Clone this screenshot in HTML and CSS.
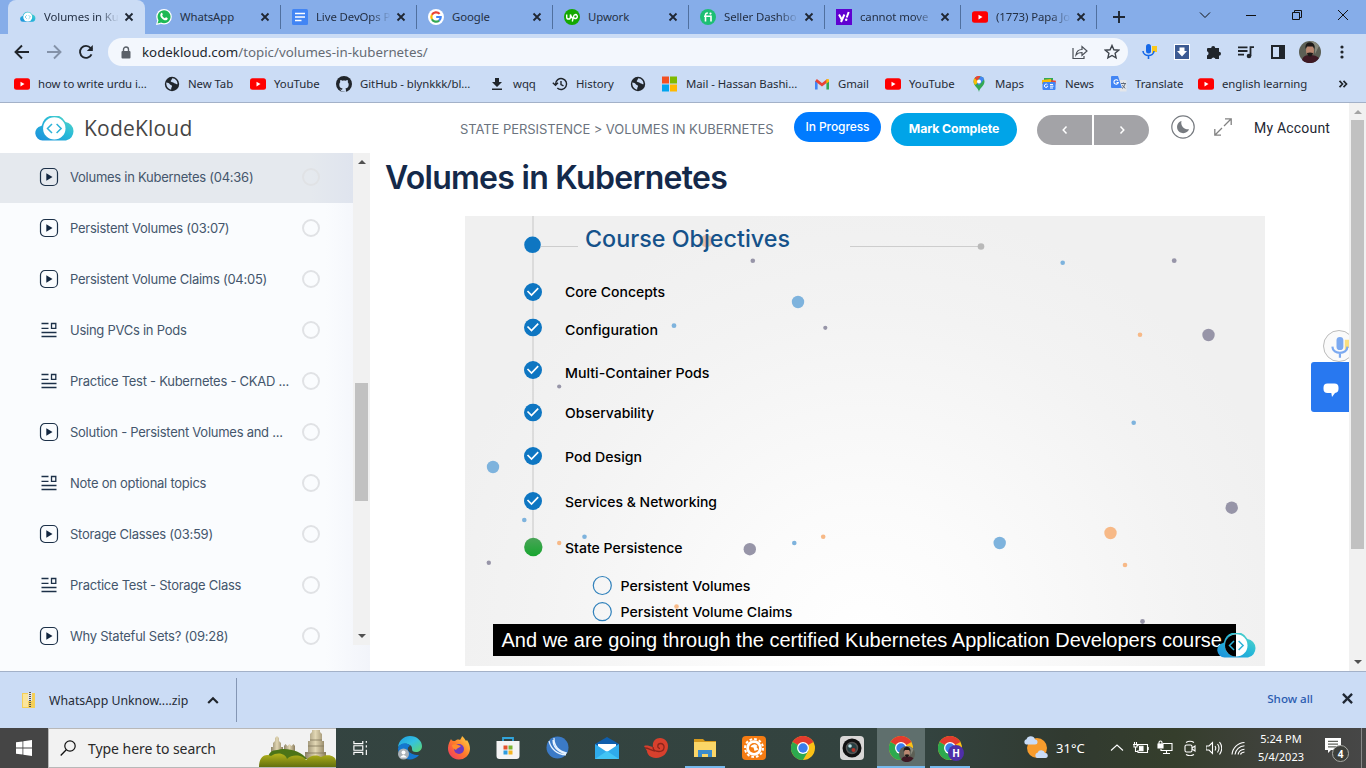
FILE: index.html
```html
<!DOCTYPE html>
<html lang="en">
<head>
<meta charset="utf-8">
<title>Volumes in Kubernetes</title>
<link rel="stylesheet" href="styles.css">
</head>
<body>
<svg class="sprite" width="0" height="0" aria-hidden="true">
  <defs>
    <linearGradient id="cloudGrad" x1="0" y1="1" x2="1" y2="0"><stop offset="0" stop-color="#1b8fdc"/><stop offset=".55" stop-color="#27b9d8"/><stop offset="1" stop-color="#5fdcc4"/></linearGradient>
    <linearGradient id="edgeGrad" x1="0" y1="0" x2="1" y2="1"><stop offset="0" stop-color="#1b9de2"/><stop offset=".5" stop-color="#35c1e0"/><stop offset="1" stop-color="#5fd869"/></linearGradient>
    <linearGradient id="fireGrad" x1="0" y1="1" x2="1" y2="0"><stop offset="0" stop-color="#f0306a"/><stop offset=".5" stop-color="#ff7a2a"/><stop offset="1" stop-color="#ffe04a"/></linearGradient>
    <linearGradient id="greenGrad" x1="0" y1="0" x2="0" y2="1"><stop offset="0" stop-color="#4aa458"/><stop offset="1" stop-color="#17a62f"/></linearGradient>
    <radialGradient id="slideBg" gradientUnits="userSpaceOnUse" cx="865" cy="640" r="440"><stop offset="0" stop-color="#fff"/><stop offset=".3" stop-color="#fbfbfb"/><stop offset=".75" stop-color="#f3f3f3"/><stop offset="1" stop-color="#f0f0f0"/></radialGradient>
    <linearGradient id="stone" x1="0" x2="1"><stop offset="0" stop-color="#8d8368"/><stop offset=".5" stop-color="#e2d7b4"/><stop offset="1" stop-color="#8a7d5d"/></linearGradient>
    <linearGradient id="bush" x1="0" y1="0" x2="0" y2="1"><stop offset="0" stop-color="#b5b41c"/><stop offset="1" stop-color="#62700e"/></linearGradient>
  </defs>
  <symbol id="close" viewBox="0 0 10 10"><path d="M1.5 1.5l7 7M8.5 1.5l-7 7" stroke="#1f2733" stroke-width="1.8"/></symbol>
  <symbol id="cloud" viewBox="0 0 40 25"><path d="M7.500 24.500a7.400 7.400 0 0 1-1.500-14.600 1 1 0 0 0 .9-.7A12.700 12.700 0 0 1 30.500 6 9.400 9.400 0 0 1 31 24.500z" fill="url(#cloudGrad)"/><circle cx="19.300" cy="12.400" r="11.200" fill="#fff"/><path d="M17 8l-4.500 4.500L17 17M21.600 8l4.500 4.500-4.500 4.500" fill="none" stroke="#2cb2d8" stroke-width="1.500"/></symbol>
  <symbol id="yt" viewBox="0 0 16 16"><rect y="2.300" width="16" height="11.500" rx="2.500" fill="#f00"/><path d="M6.500 5.700v4.700l4-2.350z" fill="#fff"/></symbol>
  <symbol id="globe" viewBox="0 0 16 16"><circle cx="8" cy="8" r="7.200" fill="#20252b"/><path d="M2.300 6.600c1.700.5 3 .5 3.500 1.600.4 1 2.200.6 2.200 1.900 0 1-.8 1.300-.9 3.600C4.100 13.300 2 10 2.300 6.600zM8.300 2.300c-.9 1-.3 1.600-1.300 2.200-1 .7.3 1.800 1.500 1.700 1-.1 1.200 1.200 2.700 1.200.9 0 1 .9 2.300.9C13.600 5 11.600 2.600 8.300 2.300z" fill="#cbdcf5"/></symbol>
  <symbol id="google" viewBox="0 0 16 16"><circle cx="8" cy="8" r="8" fill="#fff"/><g fill="none" stroke-width="2.200"><path d="M11.600 4.900A4.700 4.700 0 0 0 3.900 5.800" stroke="#ea4335"/><path d="M3.900 5.800a4.700 4.700 0 0 0 0 4.400" stroke="#fbbc05"/><path d="M3.900 10.200a4.700 4.700 0 0 0 7.200 1.400" stroke="#34a853"/><path d="M11.100 11.600A4.600 4.600 0 0 0 12.700 8H8.200" stroke="#4285f4"/></g></symbol>
  <symbol id="play" viewBox="0 0 20 20"><rect x="1.500" y="1.500" width="17" height="17" rx="4.500" fill="none" stroke="#1c3048" stroke-width="1.200"/><path d="M7.300 6.200v7.600l6.200-3.800z" fill="#12263f"/></symbol>
  <symbol id="notes" viewBox="0 0 20 20"><path d="M2.500 3.500h7M2.500 8.300h7M2.500 12.500h15M2.500 16.500h15M12.500 3.500h4.300v4.800h-4.300z" fill="none" stroke="#1c3048" stroke-width="1.300"/></symbol>
  <symbol id="check" viewBox="0 0 18 18"><circle cx="9" cy="9" r="9" fill="#0e76c2"/><path d="M3.500 8l4 4 6.700-6.800" fill="none" stroke="#fff" stroke-width="1.700"/></symbol>
  <symbol id="chrome" viewBox="0 0 24 24"><circle cx="12" cy="12" r="12" fill="#fbc116"/><path d="M12 12L1.600 6A12 12 0 0 1 22.400 6z" fill="#e33b2e"/><path d="M1.600 6A12 12 0 0 0 12 24l5.200-9L12 12z" fill="#2da94f"/><circle cx="12" cy="12" r="6" fill="#fff"/><circle cx="12" cy="12" r="4.700" fill="#3b7ded"/></symbol>
  <symbol id="portrait" viewBox="0 0 22 22"><circle cx="11" cy="11" r="11" fill="#5c5f55"/><path d="M3 19c1-4 4-5 8-5s7 1 9 3a11 11 0 0 1-17 2z" fill="#3e1924"/><path d="M11 0a11 11 0 0 1 9 5l-4 8V5z" fill="#88897c"/><ellipse cx="11" cy="9.500" rx="4" ry="5.500" fill="#b98770"/><path d="M6.500 8C6 3 8 1.500 11 1.500S16 3 15.500 8L14 5.500H8zM8 12q3-1 6 0-.5 3.500-3 3.500T8 12z" fill="#1d1918"/></symbol>
  <symbol id="mic" viewBox="0 0 16 16"><path d="M10 2h5v6h-3l-2 2z" fill="#fbc91c"/><rect x="4" y="0" width="5" height="9.500" rx="2.500" fill="#1568e8"/><path d="M1 7c.3 6 10.700 6 11 0M6.500 11.500V15" fill="none" stroke="#1568e8" stroke-width="1.600"/></symbol>
</svg>

<header class="tabstrip">
  <div class="tab tab-active"><svg class="fav"><use href="#cloud"/></svg><span class="tab-title fade">Volumes in Ku</span><svg class="x"><use href="#close"/></svg></div>
  <div class="tab"><svg class="fav" viewBox="0 0 16 16"><circle cx="8" cy="7.800" r="7.800" fill="#fff"/><path d="M0 16l1.200-4.500L5 15z" fill="#fff"/><path d="M1.500 14.500l1-3.300a6.500 6.500 0 1 1 2.600 2.400z" fill="#1db954"/><path d="M5 4.200c.8-.8 1.400-.3 1.800 1.200L6.200 6.500c.6 1.400 1.500 2.200 2.700 2.800l1-1c1.300.4 2 .8 1.800 1.400-.8 2.500-3.600 1.700-5.200.3C4.200 8.200 3.600 5.500 5 4.200z" fill="#fff"/></svg><span class="tab-title">WhatsApp</span><svg class="x"><use href="#close"/></svg></div>
  <div class="tab"><svg class="fav" viewBox="0 0 16 16"><rect width="16" height="16" rx="1.500" fill="#4285f4"/><path d="M3 4.500h10M3 8h10M3 11.500h6.500" stroke="#fff" stroke-width="1.600"/></svg><span class="tab-title fade">Live DevOps P</span><svg class="x"><use href="#close"/></svg></div>
  <div class="tab"><svg class="fav"><use href="#google"/></svg><span class="tab-title">Google</span><svg class="x"><use href="#close"/></svg></div>
  <div class="tab"><svg class="fav" viewBox="0 0 16 16"><circle cx="8" cy="8" r="8" fill="#14a800"/><path d="M2.700 5.500v2.700a1.800 1.800 0 0 0 3.700 0V5.500c.6 2.600 1.500 3.700 3 4.300M8.300 12.500l1.200-5c.4-1.600 1.200-2 2.100-2a2 2 0 1 1-.6 4l-1.600-.8" fill="none" stroke="#fff" stroke-width="1.400"/></svg><span class="tab-title">Upwork</span><svg class="x"><use href="#close"/></svg></div>
  <div class="tab"><svg class="fav" viewBox="0 0 16 16"><circle cx="8" cy="8" r="8" fill="#1dbf73"/><path d="M5.500 12.500V6c0-1.600 1-2 2.300-1.900M4 7.300h7v5.200" fill="none" stroke="#fff" stroke-width="1.600"/><circle cx="10.500" cy="4.600" r="1.100" fill="#fff"/></svg><span class="tab-title fade">Seller Dashbo</span><svg class="x"><use href="#close"/></svg></div>
  <div class="tab"><svg class="fav" viewBox="0 0 16 16"><path fill="#5f01d1" d="M0 0h16v16H0z"/><path d="M3 5.500l2.600 4.800M8.400 5.500L5 13" stroke="#fff" stroke-width="2"/><path d="M12.700 3l-2 5.500" stroke="#fff" stroke-width="2"/><circle cx="10.200" cy="10.800" r="1.200" fill="#fff"/></svg><span class="tab-title fade">cannot move</span><svg class="x"><use href="#close"/></svg></div>
  <div class="tab"><svg class="fav"><use href="#yt"/></svg><span class="tab-title fade">(1773) Papa Jo</span><svg class="x"><use href="#close"/></svg></div>
  <svg class="newtab" viewBox="0 0 12 12"><path d="M6 0v12M0 6h12" stroke="#1f2733" stroke-width="1.900"/></svg>
  <div class="winctl">
    <svg viewBox="0 0 12 12"><path d="M1 3.500l5 5 5-5"/></svg>
    <svg viewBox="0 0 12 12"><path d="M1 6.500h10"/></svg>
    <svg viewBox="0 0 12 12"><path d="M1.500 3.500h7v7h-7zM3.500 3.500v-2h7v7h-2"/></svg>
    <svg viewBox="0 0 12 12"><path d="M1 1l10 10M11 1L1 11"/></svg>
  </div>
</header>

<div class="toolbar">
  <svg class="nav" viewBox="0 0 16 16"><path d="M15 8H2M8 1.500L1.500 8 8 14.500" fill="none" stroke="#20252b" stroke-width="1.900"/></svg>
  <svg class="nav" viewBox="0 0 16 16"><path d="M1 8h13M8 1.500L14.500 8 8 14.500" fill="none" stroke="#8492a8" stroke-width="1.900"/></svg>
  <svg class="nav" viewBox="0 0 16 16"><path d="M13.500 10.300A6 6 0 1 1 12.600 4L14 5.500" fill="none" stroke="#20252b" stroke-width="1.900"/><path d="M14.800 1v6H8.800z" fill="#20252b"/></svg>
  <div class="omnibox">
    <svg class="lock" viewBox="0 0 10 13"><rect x=".5" y="5" width="9" height="7.500" rx="1" fill="#5a6068"/><path d="M2.500 5V3.500a2.500 2.500 0 0 1 5 0V5" fill="none" stroke="#5a6068" stroke-width="1.400"/></svg>
    <span class="url"><b>kodekloud.com</b>/topic/volumes-in-kubernetes/</span>
    <svg class="oi" viewBox="0 0 16 16"><path d="M1 4v10.500h11V12M4 11c.5-4 3-5.500 6-5.500V2.500L15 7l-5 4.500v-3c-3 0-4.500.5-6 2.500z" fill="none" stroke="#4a4f57" stroke-width="1.200"/></svg>
    <svg class="oi" viewBox="0 0 16 16"><path d="M8 1.500l1.900 4.300 4.700.4-3.500 3.100 1 4.600L8 11.500l-4.100 2.400 1-4.600L1.400 6.200l4.700-.4z" fill="none" stroke="#3e444c" stroke-width="1.400"/></svg>
  </div>
  <div class="exts">
    <svg><use href="#mic"/></svg>
    <svg viewBox="0 0 16 16"><path fill="#fff" d="M0 0h16v16H0z"/><path fill="#3c5a92" d="M1 1h14v14H1z"/><path d="M5.500 3.500h5V7H13l-5 5.500L3 7h2.500z" fill="#fff"/></svg>
    <svg viewBox="0 0 16 16"><path d="M2 4h3.200a2 2 0 1 1 4 0H13v3.800a2 2 0 1 1 0 4V15H9.500a2.200 2.200 0 0 0-4.200 0H1v-3.500a2.200 2.200 0 0 0 0-4.200V5a1 1 0 0 1 1-1z" fill="#20252b"/></svg>
    <svg viewBox="0 0 16 16"><path d="M0 3.300h9.500M0 7h9.500M0 10.700h6M12.500 12V3.200H16" fill="none" stroke="#20252b" stroke-width="1.800"/><circle cx="11" cy="12" r="2.300" fill="#20252b"/></svg>
    <svg viewBox="0 0 16 16"><path d="M2 2h12v12H2z" fill="none" stroke="#20252b" stroke-width="2"/><path fill="#20252b" d="M9 2h5v12H9z"/></svg>
    <svg class="avatar"><use href="#portrait"/></svg>
    <svg viewBox="0 0 16 16"><g fill="#20252b"><circle cx="8" cy="3" r="1.600"/><circle cx="8" cy="8" r="1.600"/><circle cx="8" cy="13" r="1.600"/></g></svg>
  </div>
</div>

<nav class="bookmarks">
  <div><svg><use href="#yt"/></svg><span>how to write urdu i...</span></div>
  <div><svg><use href="#globe"/></svg><span>New Tab</span></div>
  <div><svg><use href="#yt"/></svg><span>YouTube</span></div>
  <div><svg viewBox="0 0 16 16"><circle cx="8" cy="8" r="8" fill="#20252b"/><path d="M6 15.900v-2.200c-2 .4-2.300-1-3-1.600M6 15.500c0-2 .1-2.300.6-2.900C4 12.300 3.300 10.500 3.300 8.500c0-1 .3-1.700.9-2.300-.2-.8-.1-1.500.2-2.200.8 0 1.500.5 2 .8 1.100-.3 2.200-.3 3.200 0 .6-.3 1.300-.8 2-.8.4.7.4 1.400.2 2.200.6.600.9 1.300.9 2.300 0 2-.9 3.800-3.300 4.100.5.600.6 1 .6 3.300z" fill="#cbdcf5"/></svg><span>GitHub - blynkkk/bl...</span></div>
  <div><svg viewBox="0 0 16 16"><path d="M6 2h4v4h3l-5 5-5-5h3zM3 12.500h10v1.600H3z" fill="#20252b"/></svg><span>wqq</span></div>
  <div><svg viewBox="0 0 16 16"><path d="M3.600 8a5.500 5.500 0 1 1 1.700 4M9 5v3.500l2.500 1.400M.8 6.700L3.500 9.200 6 6.700" fill="none" stroke="#20252b" stroke-width="1.400"/></svg><span>History</span></div>
  <div><svg><use href="#globe"/></svg></div>
  <div><svg viewBox="0 0 16 16"><path fill="#f25022" d="M0 .5h7v7H0z"/><path fill="#7fba00" d="M8 .5h7v7H8z"/><path fill="#00a4ef" d="M0 8.500h7v7H0z"/><path fill="#ffb900" d="M8 8.500h7v7H8z"/></svg><span>Mail - Hassan Bashi...</span></div>
  <div><svg viewBox="0 0 16 16"><path d="M2.300 13.500V5" stroke="#4285f4" stroke-width="2.600"/><path d="M13.700 13.500V5" stroke="#34a853" stroke-width="2.600"/><path d="M2 4.200l6 4.600 6-4.600" fill="none" stroke="#ea4335" stroke-width="2.800"/><path d="M12.400 5.500V3.600c1.500-1.200 2.600-.5 2.600.7v1.500l-2.600 1.800z" fill="#fbbc05"/></svg><span>Gmail</span></div>
  <div><svg><use href="#yt"/></svg><span>YouTube</span></div>
  <div><svg viewBox="0 0 16 16"><path d="M8 16C7.500 12 2.500 10 2.500 5.500a5.500 5.500 0 0 1 11 0C13.500 10 8.500 12 8 16z" fill="#34a853"/><path d="M4 9C2 6.500 2.200 4 3.700 2l4.500 3.700z" fill="#fbbc05"/><path d="M3.700 2A5.500 5.500 0 0 1 9.600.3L6 5z" fill="#ea4335"/><path d="M9.600.3a5.500 5.500 0 0 1 3.500 3L8 9.500 6 7z" fill="#4285f4"/><circle cx="8" cy="5.600" r="2" fill="#fff"/></svg><span>Maps</span></div>
  <div><svg viewBox="0 0 16 16"><path fill="#34a853" d="M3 2h9v4H3z"/><path fill="#ea4335" d="M9 4l6 .8-1 5z"/><path fill="#fbbc05" d="M1 4l9-1v5H1z"/><rect x="1.500" y="6" width="13" height="8" rx="1" fill="#4285f4"/><path d="M6.500 8.800a1.700 1.700 0 1 0 .2 1.600H5.500M9 8.500h3M9 10.200h3.500M9 12h3" fill="none" stroke="#fff"/></svg><span>News</span></div>
  <div><svg viewBox="0 0 16 16"><path fill="#e4e6ea" d="M7 4h7.500a1 1 0 0 1 1 1v10.500H9z"/><path d="M0 1a1 1 0 0 1 1-1h6l4 12H1a1 1 0 0 1-1-1z" fill="#4285f4"/><path d="M7 4.700A2.200 2.200 0 1 0 7.300 6.500H5.500" fill="none" stroke="#fff" stroke-width="1.100"/><path d="M10 7.500h5M12.500 6.500v1M14 8c-.5 2-1.500 3.500-3 4.500M11.500 9c.5 1.500 1.500 2.500 2.800 3.300" fill="none" stroke="#5f6a7a"/></svg><span>Translate</span></div>
  <div><svg><use href="#yt"/></svg><span>english learning</span></div>
  <div class="more"><svg viewBox="0 0 16 16"><path d="M4.500 4.800L7.500 8l-3 3.200M8.500 4.800l3 3.200-3 3.200" fill="none" stroke="#20252b" stroke-width="1.700"/></svg></div>
</nav>

<div class="page">
  <div class="site">
    <header class="site-head">
      <svg class="logo"><use href="#cloud"/></svg>
      <span class="brand">KodeKloud</span>
      <span class="crumbs">STATE PERSISTENCE &gt; VOLUMES IN KUBERNETES</span>
      <span class="pill">In Progress</span>
      <span class="mark">Mark Complete</span>
      <div class="pager"><span><svg viewBox="0 0 10 10"><path d="M6.500 1.500L3.200 5l3.300 3.500"/></svg></span><span><svg viewBox="0 0 10 10"><path d="M3.500 1.500L6.800 5 3.500 8.500"/></svg></span></div>
      <svg class="moon" viewBox="0 0 24 24"><circle cx="12" cy="12" r="11.200" fill="#fff" stroke="#777b80" stroke-width="1.200"/><path d="M10.500 6a6.200 6.200 0 1 0 7.500 8.200A6.500 6.500 0 0 1 10.500 6z" fill="#777b80"/></svg>
      <svg class="expand" viewBox="0 0 18 18"><path d="M11 .8h6.200V7M17 1l-7 7M7 17.200H.8V11M1 17l7-7" fill="none" stroke="#828282" stroke-width="1.300"/></svg>
      <span class="account">My Account</span>
    </header>
    <div class="cols">
      <aside class="side">
        <ul class="lessons">
          <li class="current"><svg><use href="#play"/></svg><span>Volumes in Kubernetes (04:36)</span><i></i></li>
          <li><svg><use href="#play"/></svg><span>Persistent Volumes (03:07)</span><i></i></li>
          <li><svg><use href="#play"/></svg><span>Persistent Volume Claims (04:05)</span><i></i></li>
          <li><svg><use href="#notes"/></svg><span>Using PVCs in Pods</span><i></i></li>
          <li><svg><use href="#notes"/></svg><span>Practice Test - Kubernetes - CKAD ...</span><i></i></li>
          <li><svg><use href="#play"/></svg><span>Solution - Persistent Volumes and ...</span><i></i></li>
          <li><svg><use href="#notes"/></svg><span>Note on optional topics</span><i></i></li>
          <li><svg><use href="#play"/></svg><span>Storage Classes (03:59)</span><i></i></li>
          <li><svg><use href="#notes"/></svg><span>Practice Test - Storage Class</span><i></i></li>
          <li><svg><use href="#play"/></svg><span>Why Stateful Sets? (09:28)</span><i></i></li>
        </ul>
        <div class="sbar side-sbar"><svg viewBox="0 0 8 4"><path d="M0 4l4-4 4 4z" fill="#505050"/></svg><div class="thumb"></div><svg viewBox="0 0 8 4"><path d="M0 0l4 4 4-4z" fill="#505050"/></svg></div>
      </aside>
      <main class="main">
        <h1>Volumes in Kubernetes</h1>
        <svg class="slide" viewBox="465 216 800 450">
          <path fill="url(#slideBg)" d="M465 216h800v450H465z"/>
          <path d="M533 216v324M541 246.500h37M850 246.500h130" fill="none" stroke="#cdcdcd" stroke-width="1.200"/>
          <circle cx="981" cy="246.500" r="3.300" fill="#b9b9b9"/>
          <g fill="#7eb3dd"><circle cx="798" cy="302" r="6.200"/><circle cx="493" cy="467" r="6.200"/><circle cx="999.700" cy="543" r="6.200"/><circle cx="674" cy="325.700" r="2.400"/><circle cx="1062.700" cy="262.700" r="2.300"/><circle cx="1133.700" cy="422.800" r="2.300"/><circle cx="524.300" cy="520" r="2.300"/><circle cx="584.500" cy="536.700" r="2.300"/><circle cx="794.300" cy="543" r="2.300"/></g>
          <g fill="#9795a8"><circle cx="1208.500" cy="335" r="6.200"/><circle cx="1231.700" cy="507.700" r="6.200"/><circle cx="749.800" cy="549.200" r="6.200"/><circle cx="752.800" cy="260.700" r="2.300"/><circle cx="825.300" cy="327.800" r="2.100"/><circle cx="1174.200" cy="260.700" r="2.400"/><circle cx="559.200" cy="386.500" r="2.100"/><circle cx="488.800" cy="562.700" r="2.200"/><circle cx="1142.500" cy="621.500" r="2.400"/></g>
          <g fill="#f7b987"><circle cx="1110.500" cy="533" r="6.200"/><circle cx="706.500" cy="241" r="6.200" fill="#e5bfa6"/><circle cx="1140" cy="334.800" r="2.300"/><circle cx="559.200" cy="543" r="2.200"/><circle cx="823.200" cy="536.700" r="2.300"/><circle cx="1125" cy="565" r="2.300"/><circle cx="676.500" cy="606.500" r="2.300"/></g>
          <circle cx="532.500" cy="244.800" r="8.300" fill="#0e76c2"/>
          <g><use href="#check" x="524" y="283" width="18" height="18"/><use href="#check" x="524" y="318.500" width="18" height="18"/><use href="#check" x="524" y="361" width="18" height="18"/><use href="#check" x="524" y="403.500" width="18" height="18"/><use href="#check" x="524" y="447" width="18" height="18"/><use href="#check" x="524" y="492" width="18" height="18"/></g>
          <circle cx="533.300" cy="547" r="9.200" fill="url(#greenGrad)"/>
          <g fill="none" stroke="#2f80bb" stroke-width="1.200"><circle cx="602.300" cy="585.500" r="9"/><circle cx="602.300" cy="611.700" r="9"/></g>
          <text class="s-title" x="585" y="246.500" textLength="205" lengthAdjust="spacingAndGlyphs">Course Objectives</text>
          <g class="s-text">
            <text x="565" y="297.300" textLength="100" lengthAdjust="spacingAndGlyphs">Core Concepts</text>
            <text x="565" y="334.500" textLength="93" lengthAdjust="spacingAndGlyphs">Configuration</text>
            <text x="565" y="378" textLength="144.500" lengthAdjust="spacingAndGlyphs">Multi-Container Pods</text>
            <text x="565" y="418.300" textLength="89" lengthAdjust="spacingAndGlyphs">Observability</text>
            <text x="565" y="462" textLength="77" lengthAdjust="spacingAndGlyphs">Pod Design</text>
            <text x="565" y="507" textLength="152" lengthAdjust="spacingAndGlyphs">Services &amp; Networking</text>
            <text x="565" y="552.500" textLength="117.500" lengthAdjust="spacingAndGlyphs">State Persistence</text>
            <text x="620.500" y="591" textLength="130" lengthAdjust="spacingAndGlyphs">Persistent Volumes</text>
            <text x="620.500" y="617" textLength="172" lengthAdjust="spacingAndGlyphs">Persistent Volume Claims</text>
          </g>
          <path d="M493 624h743v32H493z"/>
          <text class="s-cap" x="501.500" y="647" textLength="726" lengthAdjust="spacingAndGlyphs">And we are going through the certified Kubernetes Application Developers course.</text>
          <use href="#cloud" x="1217" y="633" width="40" height="25"/>
          <path d="M1236 634.400a11 11 0 0 0 0 22z"/>
          <path d="M1234 641l-4.500 4.500 4.500 4.500" fill="none" stroke="#2cb2d8" stroke-width="1.500"/>
        </svg>
      </main>
      <div class="float">
        <div class="voice"><svg><use href="#mic"/></svg></div>
        <div class="chat"><svg viewBox="0 0 16 16"><path d="M4.500 1.500h7A4 4 0 0 1 15.500 5.500v1.500A4 4 0 0 1 12 11l-3 4-.7-4H4.500A4 4 0 0 1 .5 7V5.500A4 4 0 0 1 4.500 1.500z" fill="#fff"/></svg></div>
      </div>
    </div>
  </div>
  <div class="sbar page-sbar"><svg viewBox="0 0 8 4"><path d="M0 4l4-4 4 4z" fill="#a3a3a3"/></svg><div class="thumb"></div><svg viewBox="0 0 8 4"><path d="M0 0l4 4 4-4z" fill="#505050"/></svg></div>
</div>

<div class="downloads">
  <svg class="zip" viewBox="0 0 16 18"><path fill="#f5cf56" d="M1 2h13v15H1z"/><path fill="#fbe59b" d="M2 3h5v13H2z"/><path fill="#e4e4e4" d="M7 1h4v9H7z"/><path d="M9 1v16" stroke="#555" stroke-width="2" stroke-dasharray="1 1"/></svg>
  <span class="file">WhatsApp Unknow....zip</span>
  <svg class="up" viewBox="0 0 10 10"><path d="M1 7.500l4-4 4 4" fill="none" stroke="#20252b" stroke-width="1.800"/></svg>
  <div class="dl-sep"></div>
  <span class="showall">Show all</span>
  <svg class="dl-x"><use href="#close"/></svg>
</div>

<footer class="taskbar">
  <div class="start"><svg viewBox="0 0 16 16"><path fill="#fff" d="M0 2.300l6.500-.9v6.200H0zM7.300 1.300L16 0v7.600H7.300zM0 8.400h6.500v6.200L0 13.700zM7.300 8.400H16V16l-8.700-1.300z"/></svg></div>
  <div class="search">
    <svg class="lens" viewBox="0 0 16 16"><circle cx="10" cy="6" r="5.200" fill="none" stroke="#111" stroke-width="1.200"/><path d="M6.300 9.800L.7 15.500" stroke="#111" stroke-width="1.300"/></svg>
    <span>Type here to search</span>
    <svg class="temple" viewBox="0 0 77 38"><path d="M12 23v-5h2v-4l2-2V9l2-2 2 2v3l2 2v4h2v5z" fill="url(#stone)"/><path d="M25 24v-7l1.500-2 2 2 2-2 2 2 2-2 1.500 2v7z" fill="url(#stone)"/><path d="M46 30V23h3V12h2V5l2-2V1h8v2l2 2v7h2v11h2v7z" fill="url(#stone)"/><path d="M49 17h16M46 24h21M51 11h12" stroke="#82775a" stroke-width=".8"/><path d="M9 30c0-6 4-9 9-9 8-3 24 0 30 9z" fill="#4c7417"/><path d="M0 38c0-10 6-14 12-11 7-5 15-2 16 3 6-6 17-3 19 1 5-6 12-5 15-3 7-4 15-1 15 4v6z" fill="url(#bush)"/></svg>
  </div>
  <div class="apps">
    <div><svg class="small" viewBox="0 0 18 18"><path d="M1 1v3h10V1M1 6.500h10v5H1zM1 17v-3h10v3M15 1v2M15 6v2.500M15 11v6" fill="none" stroke="#fff" stroke-width="1.300"/></svg></div>
    <div><svg viewBox="0 0 24 24"><path d="M0 11C1 4 6 0 12 0c7 0 12 5 12 10 0 4-3 6-6 6-3 0-4-1-4-3 1-5-9-8-14-2z" fill="url(#edgeGrad)"/><path d="M0 12c2-6 10-6 12-2-4 1-3 9 9 9-6 8-21 5-21-7z" fill="#1477cf"/><circle cx="5.500" cy="18" r="5.500" fill="#aab1b7"/><circle cx="5.500" cy="16.500" r="2" fill="#fff"/><path d="M2 21.500q3.500-5 7 0z" fill="#fff"/></svg></div>
    <div><svg viewBox="0 0 24 24"><path d="M1 12C1 8 3 5 4 3c1 2 2 2 4 2 1-1 3-2 5-1 1-2 2-3 2-4 2 2 3 3 4 5l1-1c2 3 3 6 3 9a11 11 0 0 1-22-1z" fill="url(#fireGrad)"/><circle cx="12" cy="13" r="5" fill="#6d3ac0"/><path d="M5 9c4-2 6 0 9 1-2 2-4 2-5 4-2-1-4-2-4-5z" fill="#ff8b2d"/></svg></div>
    <div><svg viewBox="0 0 24 24"><path d="M7 6V2h10v4" fill="none" stroke="#31a5dc" stroke-width="1.800"/><path d="M.5 5h23v15a3 3 0 0 1-3 3h-17a3 3 0 0 1-3-3z" fill="#f4f4f4"/><path fill="#e5512b" d="M7.500 9.500h4v4h-4z"/><path fill="#79b530" d="M12.500 9.500h4v4h-4z"/><path fill="#2d9ce0" d="M7.500 14.500h4v4h-4z"/><path fill="#f4b520" d="M12.500 14.500h4v4h-4z"/></svg></div>
    <div><svg viewBox="0 0 24 24"><circle cx="12.500" cy="11.500" r="11" fill="#3b7ac6"/><path d="M4 5c2 8 7 13 17 14M9 2c0 8 4 13 13 15M8 4c0 8 6 12 13 14" fill="none" stroke="#e8f3ff" stroke-width="1.200"/></svg></div>
    <div><svg viewBox="0 0 24 24"><path d="M0 8l12-7 12 7v14H0z" fill="#0f5eac"/><path fill="#fff" d="M3 8h18v8H3z"/><path d="M0 8l12 8 12-8v15H0z" fill="#2fabeb"/><path d="M0 23l12-8 12 8z" fill="#42c5f5"/></svg></div>
    <div><svg viewBox="0 0 24 24"><path d="M0 10c3-1 5 0 9 1-1-6 3-9 7-9 5 0 8 4 8 8 0 7-5 12-12 12C6 22 3 18 3 15z" fill="#d8402d"/><path d="M16 12.500c-3 0-3-5 .5-5 5 0 5 8-1.500 8-4 0-6-2-6-4.500M1 12c4 0 5 2 10 3" fill="none" stroke="#8d241b" stroke-width="1.300"/></svg></div>
    <div class="open"><svg viewBox="0 0 24 24"><path d="M1 3h9l2 2h11v16H1z" fill="#d69a1d"/><path fill="#fbd667" d="M1 6h22v15H1z"/><path d="M5 21v-7h14v7h-4v-3H9v3z" fill="#3c8ccc"/></svg></div>
    <div><svg viewBox="0 0 24 24"><rect width="24" height="24" rx="4" fill="#f57c13"/><circle cx="12" cy="12" r="9" fill="none" stroke="#fff" stroke-width="2" stroke-dasharray="2.700 2"/><circle cx="12" cy="12" r="7.800" fill="#fff"/><circle cx="12" cy="12" r="5" fill="#f57c13"/><path d="M8.500 11a4 4 0 0 1 7-1l-1 1 2 2.500-4 1.500-1-3.500z" fill="#fff"/></svg></div>
    <div><svg><use href="#chrome"/></svg></div>
    <div><svg viewBox="0 0 24 24"><rect width="24" height="24" rx="4" fill="#d9d7d6"/><circle cx="12" cy="12" r="9.500" fill="#111"/><circle cx="12" cy="12" r="5.500" fill="#263f42" stroke="#555" stroke-width="1.500"/><circle cx="13.500" cy="14" r="2" fill="#b43227"/><circle cx="10" cy="10" r="1.800" fill="#bde1e4"/></svg></div>
    <div class="open focused"><svg viewBox="0 0 24 24"><use href="#chrome" width="24" height="24"/><use href="#portrait" x="10" y="10" width="16" height="16"/></svg></div>
    <div class="open"><svg viewBox="0 0 24 24"><use href="#chrome" width="24" height="24"/><circle cx="18" cy="17" r="8" fill="#4f2fa8"/><text x="18" y="20.500" class="badge">H</text></svg></div>
  </div>
  <div class="tray">
    <svg class="weather" viewBox="0 0 24 24"><circle cx="13" cy="12" r="10" fill="#f79c2d"/><path d="M2 8.500a2.800 2.800 0 0 1 .5-5.300A4.500 4.500 0 0 1 11 3.500a2.500 2.500 0 0 1 0 5zM13 22a2.800 2.800 0 0 1 .5-5.300 4 4 0 0 1 7.500.3 2.500 2.500 0 0 1 .5 5z" fill="#c9dcf7"/></svg>
    <span class="temp">31°C</span>
    <div class="tray-icons">
      <svg viewBox="0 0 16 16"><path d="M2 10.500l6-5.500 6 5.500"/></svg>
      <svg viewBox="0 0 16 16"><path d="M5 6V4.500h9.500v8H5V10M15.800 7v3M0 4.500h5M1 4.500V7h3V4.500M1.500 2v2.500M3.500 2v2.500M2.500 7v4.500h2"/><path fill="#fff" d="M6.500 6.300H10v4.500H6.500z"/></svg>
      <svg viewBox="0 0 16 16"><path d="M6 3.500h9v7H4V9M9.500 10.500v3M6 13.500h7M2 4V2.500a1.500 1.500 0 0 1 3 0V4"/><path fill="#fff" d="M1 4h5v4H1z"/></svg>
      <svg viewBox="0 0 16 16"><rect x="3" y="5" width="7" height="7" rx="1.500"/><path d="M10 8l3-2v5l-3-2M4 2.500q4-2.500 8 0M4 14.500q4 2.500 8 0"/></svg>
      <svg viewBox="0 0 16 16"><path d="M0 6h3l3.500-3.500v11L3 10H0zM9 6q1.500 2 0 4.500M11.500 4q3 4 0 8.500M13.500 2q4.500 6 0 12.500"/></svg>
      <svg viewBox="0 0 16 16"><path d="M2 14.500A13 13 0 0 1 14.500 2.500M5 14.500A10 10 0 0 1 14.500 5.800M8 14.500a7 7 0 0 1 6.500-5.300M10.500 14.500q.5-2 4-2.500"/></svg>
    </div>
    <div class="clock"><span>5:24 PM</span><span>5/4/2023</span></div>
    <svg class="notif" viewBox="0 0 24 24"><path d="M0 0h16v12H6l-3 3v-3H0z" fill="#fff"/><path d="M3 3.300h10M3 6.100h10M3 8.900h8" stroke="#3b3f35" stroke-width="1"/><circle cx="15.500" cy="15.500" r="8" fill="#3d3f3a" stroke="#a9aaa5"/><text x="15.500" y="19.500" class="badge">4</text></svg>
    <div class="peek"></div>
  </div>
</footer>
</body>
</html>
```
FILE: styles.css
```css
* { box-sizing: border-box; }
body { margin: 0; width: 1366px; height: 768px; overflow: hidden; display: flex; flex-direction: column; font-family: "Noto Sans", "Open Sans", sans-serif; font-size: 11.400px; color: #252b35; background: #fff; }
svg { display: block; flex: none; }
.sprite { position: absolute; }

/* tab strip */
.tabstrip { height: 34px; flex: none; background: #86ade9; display: flex; align-items: center; padding-left: 8px; }
.tab { width: 136px; height: 24px; margin-top: -1px; padding-left: 11px; display: flex; align-items: center; border-right: 1px solid #50709f; }
.tab-active { width: 137px; height: 34px; margin-top: 0; padding-left: 12px; padding-bottom: 1px; background: #cbdcf5; border-right: 0; border-radius: 8px 8px 0 0; }
.fav { width: 16px; height: 16px; }
.tab-title { width: 75px; margin-left: 8px; white-space: nowrap; color: #243044; letter-spacing: -.1px; }
.fade { -webkit-mask-image: linear-gradient(90deg, #000 72%, transparent); mask-image: linear-gradient(90deg, #000 72%, transparent); }
.x { width: 10px; height: 10px; margin-left: 5px; }
.newtab { width: 12px; height: 12px; margin-left: 16px; }
.winctl { margin-left: auto; margin-right: 17px; margin-top: -5px; display: flex; gap: 34px; }
.winctl svg { width: 12px; height: 12px; fill: none; stroke: #111; stroke-width: 1; }

/* toolbar */
.toolbar { height: 36px; flex: none; background: #cbdcf5; display: flex; align-items: center; padding-left: 14px; }
.nav { width: 16px; height: 16px; margin-right: 16px; }
.omnibox { width: 1020px; height: 28px; margin-left: -2px; border-radius: 14px; background: #f3f7fd; display: flex; align-items: center; padding: 0 10px 0 13px; }
.lock { width: 10px; height: 13px; }
.url { margin-left: 11px; margin-right: auto; font-size: 13.300px; color: #656b74; white-space: nowrap; }
.url b { font-weight: 400; color: #22272e; }
.oi { width: 16px; height: 16px; margin-left: 16px; }
.omnibox .oi:last-child { margin-right: -2px; }
.exts { display: flex; align-items: center; gap: 16px; margin-left: 14px; }
.exts svg { width: 16px; height: 16px; }
.exts .avatar { width: 22px; height: 22px; margin: 0 -3px; }

/* bookmarks */
.bookmarks { height: 33px; flex: none; background: #cbdcf5; border-bottom: 1px solid #a3b1c8; padding: 0 0 5px 14px; display: grid; align-items: center; grid-template-columns: 150px 86px 86px 153px 63px 78px 32px 152px 71px 86px 70px 70px 87px 137px 24px; letter-spacing: -.07px; }
.bookmarks div { display: flex; align-items: center; gap: 8px; white-space: nowrap; }
.bookmarks svg { width: 16px; height: 16px; }

/* page frame */
.page { height: 568px; flex: none; display: flex; background: #fff; }
.site { width: 1349px; font-family: Inter, sans-serif; position: relative; }
.sbar { width: 17px; background: #f1f1f1; display: flex; flex-direction: column; align-items: center; }
.sbar svg { width: 8px; height: 4px; }
.sbar .thumb { width: 13px; background: #c1c1c1; }
.sbar svg:last-child { margin-top: auto; }
.page-sbar { padding: 7px 0 7px; }
.page-sbar .thumb { height: 429px; margin-top: 6px; }

.site-head { height: 50px; display: flex; padding-left: 35px; }
.logo { width: 40px; height: 25px; margin-top: 13px; }
.brand { width: 130px; margin: 10px 0 0 9px; font: 400 21px/30px "Open Sans", sans-serif; letter-spacing: .2px; color: #454545; }
.crumbs { width: 314px; margin: 18px 0 0 246px; font-size: 13px; line-height: 16px; letter-spacing: -.07px; color: #6b737e; white-space: nowrap; }
.pill { width: 87px; height: 30px; margin: 9px 0 0 20px; border-radius: 15px; background: #007bff; color: #fff; font-size: 12px; line-height: 30px; letter-spacing: -.1px; text-align: center; font-weight: 500; }
.mark { width: 126px; height: 33px; margin: 10px 0 0 10px; border-radius: 16.500px; background: #00a4e8; color: #fff; font-size: 12.300px; line-height: 32px; letter-spacing: -.12px; text-align: center; font-weight: 700; }
.pager { width: 112px; height: 30px; margin: 12px 0 0 20px; display: flex; gap: 2px; border-radius: 15px; overflow: hidden; }
.pager span { flex: 1; background: #a3a3a7; display: flex; align-items: center; justify-content: center; }
.pager svg { width: 10px; height: 10px; fill: none; stroke: #fff; stroke-width: 1.500; }
.moon { width: 24px; height: 24px; margin: 12px 0 0 22px; }
.expand { width: 18px; height: 18px; margin: 15px 0 0 19px; }
.account { margin: 15px 0 0 22px; font: 400 14px/20px Roboto, sans-serif; color: #1e2733; white-space: nowrap; letter-spacing: .2px; }

.cols { display: flex; height: 518px; }
.side { width: 370px; display: flex; background: linear-gradient(90deg, #fafcfe 88%, #f2f4fa); }
.lessons { width: 353px; height: 518px; overflow: hidden; margin: 0; padding: 0; list-style: none; }
.lessons li { height: 51px; padding: 0 0 2px 39px; display: flex; align-items: center; font-size: 13px; letter-spacing: -.26px; color: #44566c; }
.lessons .current { height: 50px; background: linear-gradient(90deg, #e5e9ee 88%, #dfe4ee); }
.lessons svg { width: 20px; height: 20px; }
.lessons span { width: 232px; margin-left: 11px; white-space: nowrap; }
.lessons i { width: 18px; height: 18px; border: 2px solid #e0e2e5; border-radius: 50%; }
.side-sbar { height: 492px; padding: 7px 0; }
.side-sbar .thumb { height: 118px; margin-top: 219px; }

.main { padding-left: 16px; }
.main h1 { margin: 4px 0 0 -1px; height: 40px; font-size: 32px; line-height: 41px; font-weight: 600; letter-spacing: -.72px; color: #14294a; white-space: nowrap; }
.slide { width: 800px; height: 450px; margin: 19px 0 0 79px; }
.s-title { font: 500 23px Inter, sans-serif; fill: #15528a; }
.s-text { font: 500 13.500px Inter, sans-serif; fill: #000; }
.s-cap { font: 400 20px "Liberation Sans", Arial, sans-serif; fill: #fff; }

/* floating buttons over the page's right edge */
.float { position: absolute; right: 0; top: 227px; width: 38px; overflow: hidden; }
.voice { width: 32px; height: 32px; margin-left: 12px; border: 1px solid #bbb; border-radius: 50%; background: #fafafa; display: flex; align-items: center; padding: 3px 0 0 7px; }
.voice svg { width: 22px; height: 22px; opacity: .55; }
.chat { height: 50px; background: #2878f0; border-radius: 3px 0 0 3px; display: flex; align-items: center; padding: 6px 0 0 12px; }
.chat svg { width: 16px; height: 16px; }

/* download shelf */
.downloads { height: 57px; flex: none; border-top: 1px solid #a3b1c8; background: #cbdcf5; display: flex; align-items: center; padding-left: 21px; }
.zip { width: 16px; height: 18px; }
.file { width: 140px; margin-left: 12px; font-size: 12.300px; white-space: nowrap; }
.up { width: 12px; height: 12px; margin-left: 18px; }
.dl-sep { width: 1px; height: 44px; margin-left: 17px; background: #8496b4; }
.showall { margin-left: auto; padding-bottom: 3px; font-size: 11.600px; font-weight: 500; color: #2a5bb0; }
.dl-x { width: 13px; height: 13px; margin: 0 12px 3px 28px; }

/* taskbar */
.taskbar { height: 40px; flex: none; display: flex; color: #fff; background: linear-gradient(90deg, #344441 0, #33433f 68%, #313a30 78%, #353e2c 86%, #41423e 94%, #474747); }
.start { width: 48px; background: #454545; display: flex; align-items: center; justify-content: center; }
.start svg { width: 16px; height: 16px; }
.search { width: 288px; background: #f2f2f2; border: 1px solid #b8b8b8; border-right: 0; display: flex; align-items: center; padding-left: 11px; color: #2a2a2a; font-size: 14px; letter-spacing: -.05px; }
.search span { width: 128px; margin-left: 12px; white-space: nowrap; }
.lens { width: 16px; height: 16px; }
.temple { width: 77px; height: 38px; margin-left: auto; }
.apps { display: flex; }
.apps div { width: 49.200px; display: flex; align-items: center; justify-content: center; }
.apps svg { width: 24px; height: 24px; overflow: visible; }
.apps .small { width: 18px; height: 16px; }
.apps .open { width: 40px; margin: 0 4.600px; border-bottom: 2px solid #76b9ed; padding-top: 2px; }
.apps .focused { width: 48px; margin: 0 1.200px 0 0; background: #5f6f6d; }
.apps .focused + .open { margin-left: 3.600px; }
.badge { font: 700 10px "Noto Sans", sans-serif; fill: #fff; text-anchor: middle; }
.tray { margin-left: auto; display: flex; align-items: center; }
.weather { width: 24px; height: 24px; }
.temp { width: 32px; margin-left: 8px; font-size: 13px; }
.tray-icons { display: flex; gap: 8.200px; margin-left: 21px; }
.tray-icons svg { width: 16px; height: 16px; fill: none; stroke: #fff; stroke-width: 1.100; }
.clock { width: 58px; margin-left: 6px; display: flex; flex-direction: column; align-items: center; font-size: 11px; line-height: 18px; white-space: nowrap; }
.notif { width: 24px; height: 24px; margin-left: 15px; margin-top: 3px; overflow: visible; }
.peek { width: 1px; height: 40px; margin: 0 4px 0 12px; background: #888; }
```
